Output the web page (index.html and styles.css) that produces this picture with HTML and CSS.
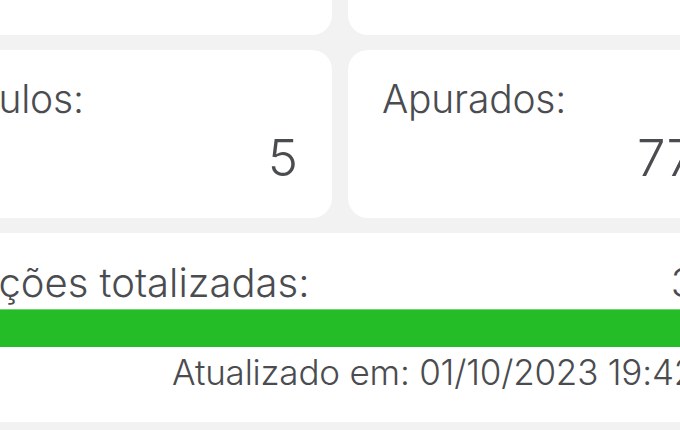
FILE: index.html
```html
<!DOCTYPE html>
<html lang="pt-BR">
<head>
    <meta charset="UTF-8">
    <meta name="viewport" content="width=device-width, initial-scale=1.0">
    <title>Resultados</title>
    <link rel="stylesheet" href="styles.css">
</head>
<body>
    <div class="screen">
        <div class="stats-grid">
            <div class="card stat">
                <div class="stat-label">Brancos:</div>
                <div class="stat-value">12</div>
            </div>
            <div class="card stat">
                <div class="stat-label">Válidos:</div>
                <div class="stat-value">1.204</div>
            </div>

            <div class="card stat">
                <div class="stat-label">Nulos:</div>
                <div class="stat-value">5</div>
            </div>
            <div class="card stat">
                <div class="stat-label">Apurados:</div>
                <div class="stat-value">77</div>
            </div>

            <!-- Progresso da totalização -->
            <div class="card progress-card">
                <div class="progress-head">
                    <span>Seções totalizadas:</span>
                    <span>3</span>
                </div>
                <div class="progress-bar">
                    <div class="progress-fill" style="width: 100%"></div>
                </div>
                <div class="updated">Atualizado em: 01/10/2023 19:42</div>
            </div>
        </div>
    </div>
</body>
</html>
```

FILE: styles.css
```css
* {
    box-sizing: border-box;
}

html, body {
    margin: 0;
    height: 100%;
    overflow: hidden;
}

body {
    background: #f2f2f2;
    font-family: Inter, Roboto, "Liberation Sans", Arial, sans-serif;
    font-weight: 350;
    color: #4a4c50;
}

/* The view is zoomed in on the middle of the screen */
.screen {
    width: 794px;
    margin-left: -65px;
    margin-top: -133px;
}

.stats-grid {
    display: grid;
    grid-template-columns: 397px 381px;
    gap: 15px 16px;
}

.card {
    background: #ffffff;
    border-radius: 20px;
}

.stat {
    height: 168px;
    padding: 26px 34px 0 34px;
}

.stat-label {
    font-size: 39px;
    line-height: 1.2;
    letter-spacing: -0.2px;
}

.stat-value {
    font-size: 51px;
    line-height: 1.2;
    text-align: right;
    margin-top: 4px;
}

.progress-card {
    grid-column: 1 / -1;
    height: 189px;
    padding: 26px 34px 0 15px;
}

.progress-head {
    display: flex;
    justify-content: space-between;
    font-size: 40px;
    line-height: 1.2;
}

.progress-bar {
    margin: 2px -34px 0 -15px;
    height: 38px;
    background: #e6e6e6;
}

.progress-fill {
    height: 100%;
    background: #24bd27;
    border-top: 1px solid #6fd66f;
}

.updated {
    margin-top: 4px;
    font-size: 35px;
    line-height: 1.2;
    letter-spacing: -0.2px;
    text-align: right;
}
```
